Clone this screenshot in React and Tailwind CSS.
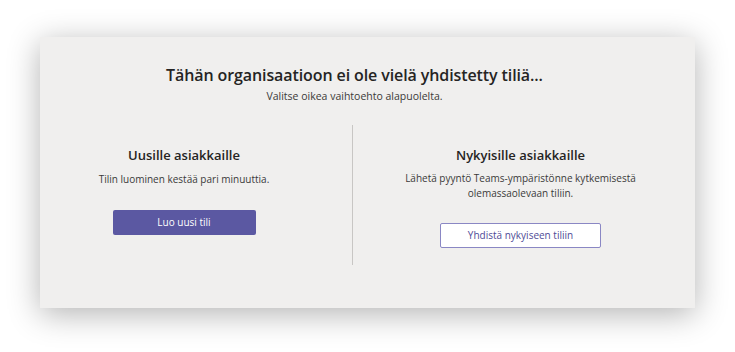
export default function App() {
  return (
    <div className="w-[735px] h-[352px] bg-white overflow-hidden" style={{ fontFamily: '"Open Sans", "Noto Sans", sans-serif' }}>
      <div className="ml-[40px] mt-[37px] w-[655px] h-[271px] bg-[#f0efee] shadow-[0_6px_30px_rgba(0,0,0,0.3)] flex flex-col">
        <div className="pt-[26px] pr-[26px] flex flex-col items-center">
          <div className="text-[16px] leading-[24px] font-semibold text-[#252423] tracking-[-0.1px]">Tähän organisaatioon ei ole vielä yhdistetty tiliä...</div>
          <div className="mt-[1px] text-[10.5px] leading-[16px] text-[#3b3a39]">Valitse oikea vaihtoehto alapuolelta.</div>
        </div>
        <div className="mt-[21px] flex h-[140px]">
          <div className="w-[312px] pr-[24px] flex flex-col items-center pt-[20px]">
            <div className="text-[13px] leading-[20px] font-semibold text-[#252423]">Uusille asiakkaille</div>
            <div className="mt-[6px] text-[10px] leading-[16px] text-[#3b3a39] whitespace-nowrap">Tilin luominen kestää pari minuuttia.</div>
            <button className="mt-[23px] w-[143px] h-[25px] rounded-[2px] bg-[#5b58a2] text-white text-[10px] flex items-center justify-center">Luo uusi tili</button>
          </div>
          <div className="w-px h-[140px] bg-[#c8c6c4]"></div>
          <div className="flex-1 pr-[7px] flex flex-col items-center pt-[20px]">
            <div className="text-[13px] leading-[20px] font-semibold text-[#252423]">Nykyisille asiakkaille</div>
            <div className="mt-[6px] text-[10px] leading-[15px] text-[#3b3a39] text-center whitespace-nowrap">Lähetä pyyntö Teams-ympäristönne kytkemisestä<br />olemassaolevaan tiliin.</div>
            <button className="mt-[22px] w-[161px] h-[25px] rounded-[2px] bg-white border border-[#8a87c4] text-[#4f4b96] text-[10px] flex items-center justify-center">Yhdistä nykyiseen tiliin</button>
          </div>
        </div>
      </div>
    </div>
  );
}
